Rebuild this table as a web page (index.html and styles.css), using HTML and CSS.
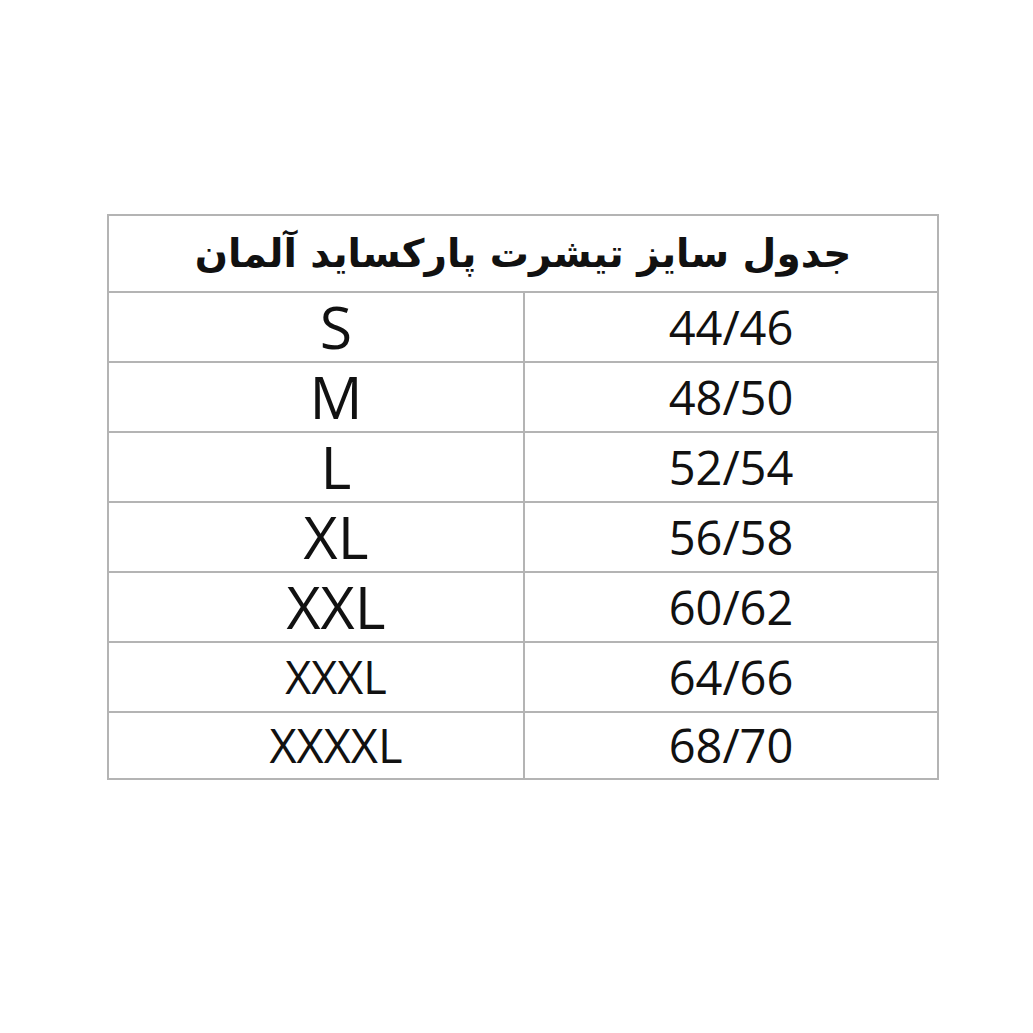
FILE: index.html
```html
<!DOCTYPE html>
<html lang="fa">
<head>
<meta charset="utf-8">
<title>جدول سایز</title>
<link rel="stylesheet" href="styles.css">
</head>
<body>
<div class="page">
<table class="size-table">
<colgroup><col class="col-size"><col class="col-num"></colgroup>
<thead>
<tr><th colspan="2" class="title" dir="rtl">جدول سایز تیشرت پارکساید آلمان</th></tr>
</thead>
<tbody>
<tr><td class="size">S</td><td class="num">44/46</td></tr>
<tr><td class="size">M</td><td class="num">48/50</td></tr>
<tr><td class="size">L</td><td class="num">52/54</td></tr>
<tr><td class="size">XL</td><td class="num">56/58</td></tr>
<tr><td class="size">XXL</td><td class="num">60/62</td></tr>
<tr><td class="size small">XXXL</td><td class="num">64/66</td></tr>
<tr class="last"><td class="size small wide">XXXXL</td><td class="num">68/70</td></tr>
</tbody>
</table>
</div>
</body>
</html>
```
FILE: styles.css
```css
html, body {
  margin: 0;
  padding: 0;
  background: #ffffff;
}
.page {
  padding: 214px 0 0 107px;
}
.size-table {
  border-collapse: collapse;
  width: 830px;
  table-layout: fixed;
  color: #111;
  font-family: "Open Sans", "Noto Sans", sans-serif;
}
.col-size { width: 416px; }
.col-num { width: 414px; }
.size-table th,
.size-table td {
  border: 2px solid #b4b4b4;
  padding: 0;
  text-align: center;
  vertical-align: middle;
}
.title {
  height: 75px;
  font-family: "DejaVu Sans", sans-serif;
  font-weight: bold;
  font-size: 39px;
  line-height: 1;
}
.size-table tbody tr { height: 70px; }
.size-table tbody tr.last { height: 67px; }
.size {
  font-size: 59px;
  font-weight: 400;
  line-height: 0.9;
  padding-left: 40px !important;
}
.size.small {
  font-size: 45px;
}
.size.wide {
  font-size: 47px;
}
.num {
  font-size: 47px;
  line-height: 0.9;
}
```
